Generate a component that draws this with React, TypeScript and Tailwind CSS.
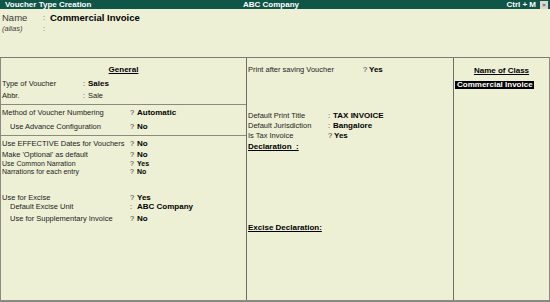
import React from 'react';

type Field = {
  label: string;
  sep?: string;
  value?: string;
  bold?: boolean;
  mt: string;
  w: string;
  sw?: string;
  h?: string;
  small?: boolean;
};

const generalFields: Field[] = [
  { label: 'Type of Voucher', sep: ':', value: 'Sales', bold: true, mt: 'mt-[4px]', w: 'w-[82px] pl-[1px]', sw: 'w-[5px]' },
  { label: 'Abbr.', sep: ':', value: 'Sale', mt: 'mt-[2px]', w: 'w-[82px] pl-[1px]', sw: 'w-[5px]' },
];

const numberingFields: Field[] = [
  { label: 'Method of Voucher Numbering', sep: '?', value: 'Automatic', bold: true, mt: 'mt-[3px]', w: 'w-[129px] pl-[1px]' },
  { label: 'Use Advance Configuration', sep: '?', value: 'No', bold: true, mt: 'mt-[4px]', w: 'w-[129px] pl-[9px]' },
];

const optionFields: Field[] = [
  { label: 'Use EFFECTIVE Dates for Vouchers', sep: '?', value: 'No', bold: true, mt: 'mt-[3px]', w: 'w-[129px] pl-[1px]' },
  { label: "Make 'Optional' as default", sep: '?', value: 'No', bold: true, mt: 'mt-[1px]', w: 'w-[129px] pl-[1px]' },
  { label: 'Use Common Narration', sep: '?', value: 'Yes', bold: true, mt: 'mt-0', w: 'w-[129px] pl-[1px]', h: 'h-[8px] leading-[8px] text-[7px]', small: true },
  { label: 'Narrations for each entry', sep: '?', value: 'No', bold: true, mt: 'mt-0', w: 'w-[129px] pl-[1px]', h: 'h-[8px] leading-[8px] text-[7px]', small: true },
  { label: 'Use for Excise', sep: '?', value: 'Yes', bold: true, mt: 'mt-[17px]', w: 'w-[129px] pl-[1px]', h: 'h-[9px] leading-[9px]' },
  { label: 'Default Excise Unit', sep: ':', value: 'ABC Company', bold: true, mt: 'mt-0', w: 'w-[129px] pl-[9px]', h: 'h-[9px] leading-[9px]' },
  { label: 'Use for Supplementary Invoice', sep: '?', value: 'No', bold: true, mt: 'mt-[3px]', w: 'w-[129px] pl-[9px]' },
];

const printFields: Field[] = [
  { label: 'Default Print Title', sep: ':', value: 'TAX INVOICE', bold: true, mt: 'mt-[36px]', w: 'w-[81px] pl-[1px]', sw: 'w-[5px]' },
  { label: 'Default Jurisdiction', sep: ':', value: 'Bangalore', bold: true, mt: 'mt-0', w: 'w-[81px] pl-[1px]', sw: 'w-[5px]' },
  { label: 'Is Tax Invoice', sep: '?', value: 'Yes', bold: true, mt: 'mt-0', w: 'w-[81px] pl-[1px]', sw: 'w-[6px]' },
];

const FieldRow = ({ f }: { f: Field }) => (
  <div className={`flex items-center whitespace-nowrap ${f.h ?? 'h-[10px] leading-[10px]'} ${f.mt}`}>
    <span className={`shrink-0 ${f.w}`}>{f.label}</span>
    <span className={`shrink-0 text-[#333] ${f.sw ?? 'w-[7px]'}`}>{f.sep}</span>
    <span className={f.bold ? (f.small ? 'text-[7px] font-bold text-black' : 'text-[8px] font-bold text-black') : ''}>
      {f.value}
    </span>
  </div>
);

export default function App() {
  return (
    <div className="flex h-[302px] w-[550px] flex-col overflow-hidden bg-[#eef0d6] text-[7.5px] text-[#1c1c1c] [font-family:'Liberation_Sans',Arial,sans-serif]">
      {/* title bar */}
      <div className="flex h-[9px] shrink-0 items-center bg-[#0f5648] text-[8px] font-bold leading-[9px] text-white">
        <span className="w-[243px] pl-[5px]">Voucher Type Creation</span>
        <span className="flex-1">ABC Company</span>
        <span className="pr-[4px]">Ctrl + M</span>
        <span className="mr-[2px] flex h-[8px] w-[8px] items-center justify-center bg-[#d8d8d0] text-[6px] leading-none text-[#555]">
          ×
        </span>
      </div>

      {/* name header */}
      <div className="h-[49px] shrink-0 border-b border-[#7c7c74] pt-[3px]">
        <div className="flex h-[12px] items-center whitespace-nowrap leading-[12px]">
          <span className="w-[43px] pl-[2px] text-[9.5px] text-[#3a3a3a]">Name</span>
          <span className="w-[7px] text-[#555]">:</span>
          <span className="text-[9.5px] font-bold text-black">Commercial Invoice</span>
        </div>
        <div className="flex h-[9px] items-center leading-[9px]">
          <span className="w-[43px] pl-[2px] italic text-[#3a3a3a]">(alias)</span>
          <span className="text-[#555]">:</span>
        </div>
      </div>

      {/* body */}
      <div className="flex min-h-0 flex-1 border-b-2 border-l border-r border-[#8a8a82]">
        {/* general column */}
        <div className="flex w-[246px] shrink-0 flex-col border-r border-[#6e6e66]">
          <div className="border-b border-[#8a8a82] pb-[3px]">
            <div className="mt-[7px] flex h-[10px] items-center justify-center leading-[10px]">
              <span className="text-[8px] font-bold text-black underline underline-offset-[1px]">General</span>
            </div>
            {generalFields.map(f => (
              <FieldRow key={f.label} f={f} />
            ))}
          </div>
          <div className="border-b border-[#8a8a82] pb-[3px]">
            {numberingFields.map(f => (
              <FieldRow key={f.label} f={f} />
            ))}
          </div>
          <div>
            {optionFields.map(f => (
              <FieldRow key={f.label} f={f} />
            ))}
          </div>
        </div>

        {/* print column */}
        <div className="flex w-[207px] shrink-0 flex-col border-r border-[#6e6e66]">
          <FieldRow
            f={{ label: 'Print after saving Voucher', sep: '?', value: 'Yes', bold: true, mt: 'mt-[7px]', w: 'w-[116px] pl-[1px]', sw: 'w-[6px]' }}
          />
          {printFields.map(f => (
            <FieldRow key={f.label} f={f} />
          ))}
          <div className="mt-[1px] flex h-[10px] items-center pl-[1px] leading-[10px]">
            <span className="text-[8px] font-bold text-black underline underline-offset-[1px]">Declaration&nbsp;&nbsp;:</span>
          </div>
          <div className="mt-[71px] flex h-[10px] items-center pl-[1px] leading-[10px]">
            <span className="text-[8px] font-bold text-black underline underline-offset-[1px]">Excise Declaration:</span>
          </div>
        </div>

        {/* class column */}
        <div className="flex flex-1 flex-col">
          <div className="mt-[8px] flex h-[10px] items-center justify-center leading-[10px]">
            <span className="text-[8px] font-bold text-black underline underline-offset-[1px]">Name of Class</span>
          </div>
          <div className="ml-[1px] mt-[5px] flex h-[8px] w-[79px] items-center bg-black pl-[2px] text-[8px] font-bold leading-[8px] text-white">
            Commercial Invoice
          </div>
        </div>
      </div>
    </div>
  );
}
